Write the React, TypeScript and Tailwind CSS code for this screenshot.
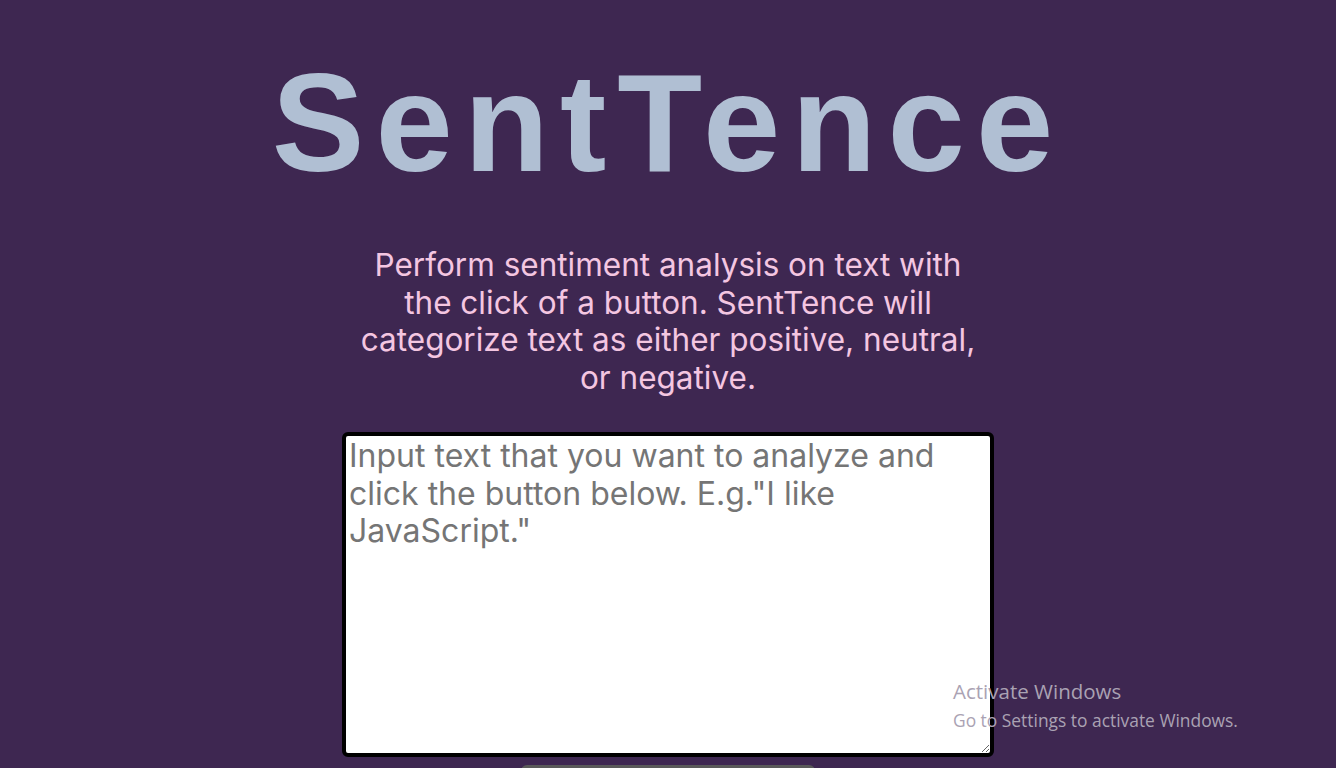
import React from 'react'

const App = () => {
  return (
    <div className="min-h-screen bg-[#3e2751] flex flex-col items-center overflow-hidden relative" style={{ height: 768 }}>
      <h1 className="shrink-0 mt-[38px] text-[139px] leading-[170px] font-bold tracking-[0.08em] text-[#b0bfd3] font-['Liberation_Sans',Arial,sans-serif]">
        SentTence
      </h1>
      <p className="shrink-0 mt-[38px] w-[628px] text-center text-[31.5px] leading-[37.5px] text-[#f4c6e1] font-['Inter',sans-serif]">
        Perform sentiment analysis on text with the click of a button. SentTence will categorize text as either positive, neutral, or negative.
      </p>
      <textarea
        className="shrink-0 mt-[36px] w-[652px] h-[325px] bg-white border-4 border-black rounded-[6px] px-[3px] py-[1px] text-[32px] leading-[37.5px] text-black placeholder:text-[#757575] font-['Inter',sans-serif] outline-none"
        placeholder={'Input text that you want to analyze and click the button below. E.g."I like JavaScript."'}
      />
      <button className="shrink-0 mt-[8px] w-[294px] h-[40px] bg-[#5a5a5a] rounded-md"></button>

      <div className="absolute left-[953px] top-[677px] pointer-events-none font-['Open_Sans',sans-serif] text-[#aaa2b3]">
        <div className="text-[20.5px] leading-[28px]">Activate Windows</div>
        <div className="text-[17.4px] leading-[22px] mt-[4px]">Go to Settings to activate Windows.</div>
      </div>
    </div>
  )
}

export default App
